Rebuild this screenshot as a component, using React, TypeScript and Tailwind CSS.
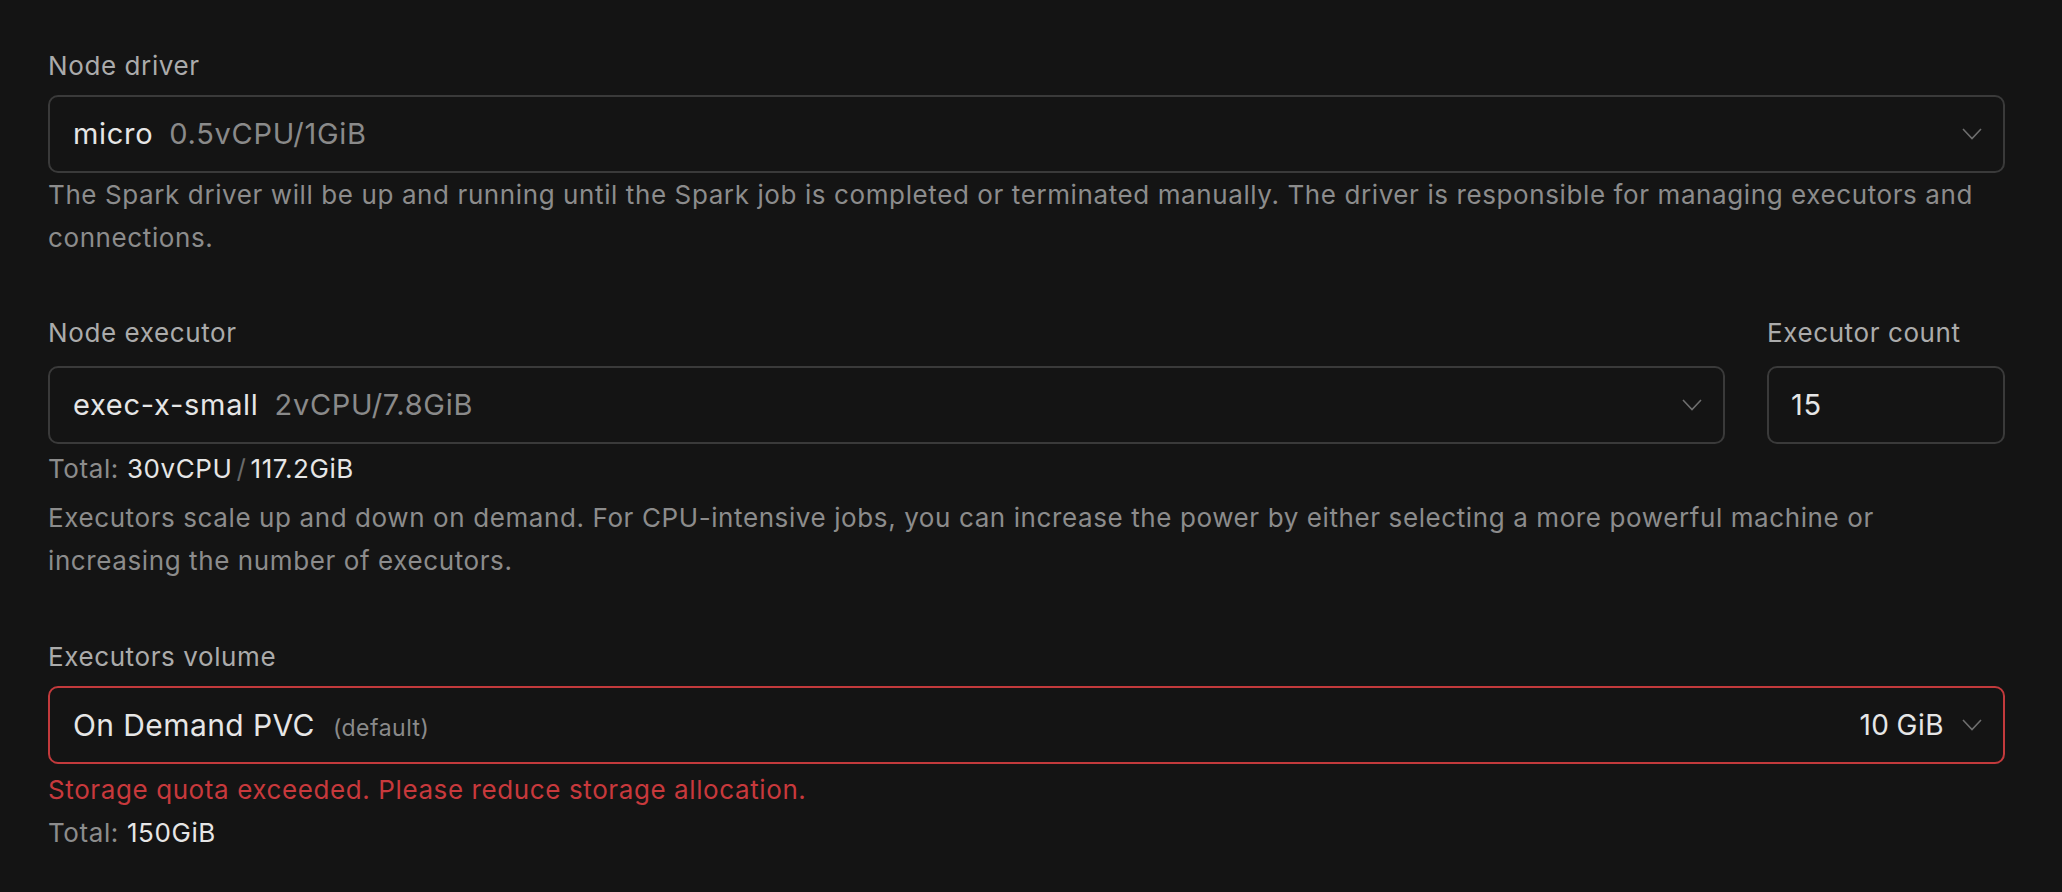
import React from 'react';

function Chevron() {
  return (
    <svg width="20" height="12" viewBox="0 0 20 12" fill="none" className="shrink-0">
      <polyline points="1,1 10,10.5 19,1" stroke="#6e6e6e" strokeWidth="1.6" />
    </svg>
  );
}

function Label({ children, className = '' }: { children: React.ReactNode; className?: string }) {
  return <div className={`text-[26px] leading-[32px] tracking-[0.6px] text-[#ababab] ${className}`}>{children}</div>;
}

export default function App() {
  return (
    <main
      className="min-h-screen bg-[#141414] pl-[48px] pr-[57px] pt-[50px] pb-[40px]"
      style={{ fontFamily: 'Inter, "Noto Sans", sans-serif' }}
    >
      {/* driver */}
      <section>
        <Label className="mb-[13px]">Node driver</Label>
        <div className="flex h-[78px] items-center justify-between rounded-[10px] border-2 border-[#3a3a3a] pl-[23px] pr-[21px]">
          <div className="flex items-baseline gap-[16px] text-[29px] tracking-[0.7px]">
            <span className="text-[#e6e6e6]">micro</span>
            <span className="text-[#8a8a8a]">0.5vCPU/1GiB</span>
          </div>
          <Chevron />
        </div>
        <p className="text-[26px] leading-[43px] tracking-[0.6px] text-[#8c8c8c]">
          The Spark driver will be up and running until the Spark job is completed or terminated manually. The driver is responsible for managing executors and connections.
        </p>
      </section>

      {/* executor */}
      <section className="mt-[58px]">
        <div className="flex gap-[42px]">
          <div className="flex-1">
            <Label className="mb-[17px]">Node executor</Label>
            <div className="flex h-[78px] items-center justify-between rounded-[10px] border-2 border-[#3a3a3a] pl-[23px] pr-[21px]">
              <div className="flex items-baseline gap-[16px] text-[29px] tracking-[0.7px]">
                <span className="text-[#e6e6e6]">exec-x-small</span>
                <span className="text-[#8a8a8a]">2vCPU/7.8GiB</span>
              </div>
              <Chevron />
            </div>
          </div>
          <div className="w-[238px]">
            <Label className="mb-[17px]">Executor count</Label>
            <div className="flex h-[78px] items-center rounded-[10px] border-2 border-[#3a3a3a] px-[22px] text-[29px] tracking-[0.7px] text-[#e6e6e6]">
              15
            </div>
          </div>
        </div>
        <div className="mt-[9px] text-[26px] leading-[32px] tracking-[0.6px] text-[#8c8c8c]">
          Total: <span className="text-[#e6e6e6]">30vCPU</span>
          <span className="mx-[4px] text-[#6a6a6a]">/</span>
          <span className="text-[#e6e6e6]">117.2GiB</span>
        </div>
        <p className="mt-[11px] text-[26px] leading-[43px] tracking-[0.6px] text-[#8c8c8c]">
          Executors scale up and down on demand. For CPU-intensive jobs, you can increase the power by either selecting a more powerful machine or increasing the number of executors.
        </p>
      </section>

      {/* volume */}
      <section className="mt-[59px]">
        <Label className="mb-[13px]">Executors volume</Label>
        <div className="flex h-[78px] items-center justify-between rounded-[10px] border-2 border-[#c23a3c] pl-[23px] pr-[21px]">
          <div className="flex items-baseline gap-[18px]">
            <span className="text-[30px] tracking-[0.4px] text-[#e6e6e6]">On Demand PVC</span>
            <span className="text-[23px] tracking-[0.5px] text-[#8a8a8a]">(default)</span>
          </div>
          <div className="flex items-center gap-[18px]">
            <span className="text-[28px] tracking-[0.5px] text-[#e6e6e6]">
              10<span className="ml-[7px]">GiB</span>
            </span>
            <Chevron />
          </div>
        </div>
        <div className="mt-[8px] text-[26px] leading-[36px] tracking-[0.6px] text-[#c8393c]">
          Storage quota exceeded. Please reduce storage allocation.
        </div>
        <div className="mt-[9px] text-[26px] leading-[32px] tracking-[0.6px] text-[#8c8c8c]">
          Total: <span className="text-[#e6e6e6]">150GiB</span>
        </div>
      </section>
    </main>
  );
}
